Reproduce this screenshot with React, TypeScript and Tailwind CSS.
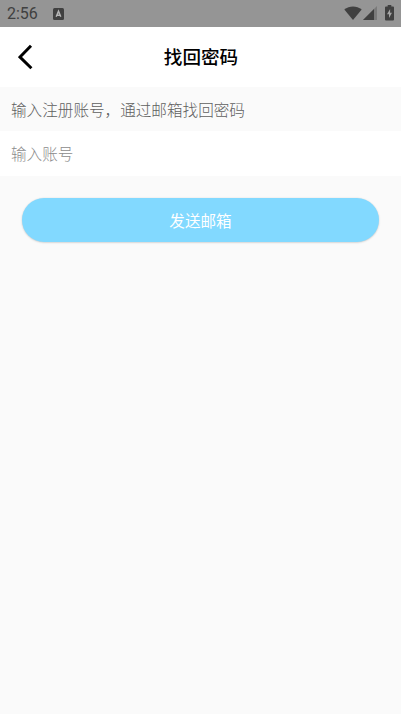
import { useState } from "react";

function StatusBar() {
  return (
    <div className="flex h-[27px] items-center justify-between bg-[#959595] pl-[7px] pr-[7px] text-[#404040]">
      <div className="flex items-center gap-[15px]">
        <span className="pt-px font-[Roboto,sans-serif] text-[16px] leading-[26px] font-normal">2:56</span>
        <svg width="11" height="12" viewBox="0 0 11 12">
          <rect width="11" height="12" rx="1.5" fill="currentColor" />
          <path d="M3.2 8.8L5.5 3.2L7.8 8.8M3.9 7.2H7.1" fill="none" stroke="#b4b4b4" strokeWidth="1.5" />
        </svg>
      </div>
      <div className="flex items-center pb-[2px]">
        <svg width="18" height="14" viewBox="0 0 18 14">
          <path d="M0.3 3.6C5.3 -0.7 12.7 -0.7 17.7 3.6L9 14Z" fill="currentColor" />
        </svg>
        <svg className="ml-[1px]" width="14" height="14" viewBox="0 0 14 14">
          <path d="M14 0V14H0Z" fill="#7a7a7a" />
          <path d="M11 3V14H0Z" fill="currentColor" />
        </svg>
        <svg className="ml-[8px]" width="9" height="16" viewBox="0 0 9 16">
          <path d="M2.7 0H6.3V1.5H8Q9 1.5 9 2.5V14.5Q9 15.5 8 15.5H1Q0 15.5 0 14.5V2.5Q0 1.5 1 1.5H2.7Z" fill="currentColor" />
          <path d="M5.1 4L2 9.2H4V13L7 7.8H5.1Z" fill="#a5a5a5" />
        </svg>
      </div>
    </div>
  );
}

export default function App() {
  const [account, setAccount] = useState("");

  return (
    <div className="min-h-screen bg-[#fafafa] font-['Noto_Sans_CJK_SC',sans-serif] font-light">
      <StatusBar />

      <header className="grid h-[60px] grid-cols-[50px_1fr_50px] items-center bg-white">
        <button type="button" aria-label="返回" className="flex h-full items-center pb-px pl-[18px]">
          <svg width="15" height="26" viewBox="0 0 15 26">
            <path d="M13 1.8L2 13L13.4 24.2" fill="none" stroke="black" strokeWidth="3" />
          </svg>
        </button>
        <h1 className="pb-[2px] pl-[1px] text-center text-[18.6px] font-medium text-black">找回密码</h1>
      </header>

      <p className="h-[44px] pl-[11px] text-[15.6px] leading-[44px] text-[#606060]">
        输入注册账号，通过邮箱找回密码
      </p>

      <input
        type="text"
        value={account}
        onChange={(e) => setAccount(e.target.value)}
        placeholder="输入账号"
        className="block h-[45px] w-full bg-white pb-[2px] pl-[11px] text-[15.6px] outline-none placeholder:text-[#8c8c8c]"
      />

      <div className="px-[22px] pt-[22px]">
        <button
          type="button"
          className="h-[44px] w-full rounded-full bg-[#82d9ff] pt-px text-[15.6px] font-normal text-white shadow-[0_0.5px_2px_rgba(0,0,0,0.22)]">
          发送邮箱
        </button>
      </div>
    </div>
  );
}
